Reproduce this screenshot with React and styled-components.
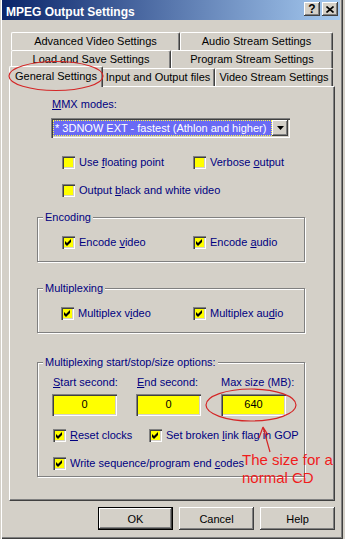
import React from 'react'
import styled, { createGlobalStyle, css } from 'styled-components'

const face = '#d4d0c8'
const navy = '#000080'

const GlobalStyle = createGlobalStyle`
  html, body {
    margin: 0;
    padding: 0;
    background: ${face};
  }
  body {
    font-family: "Liberation Sans", Arial, sans-serif;
    font-size: 11px;
  }
`

const Window = styled.div`
  position: relative;
  width: 343px;
  height: 539px;
  box-sizing: border-box;
  background: ${face};
  box-shadow: inset 1px 0 ${face}, inset 2px 0 #fff, inset -1px -1px #404040, inset -2px -2px #808080;
  display: flex;
  flex-direction: column;
  overflow: hidden;
`

const TitleBar = styled.div`
  height: 20px;
  margin: 0 3px 0 2px;
  padding: 0 2px 0 4px;
  display: flex;
  align-items: flex-start;
  background: linear-gradient(to right, #0a246a, #a6caf0);
`

const Title = styled.span`
  flex: 1;
  margin-top: 5px;
  color: #fff;
  font-weight: bold;
  font-size: 12px;
  line-height: 14px;
  white-space: nowrap;
`

const CaptionButton = styled.div`
  width: 16px;
  height: 14px;
  margin: 2px 0 0 ${p => p.$gap || 0}px;
  box-sizing: border-box;
  background: ${face};
  box-shadow: inset -1px -1px #404040, inset 1px 1px #fff, inset -2px -2px #808080;
  display: flex;
  align-items: center;
  justify-content: center;
  color: #000;
  font-weight: bold;
  font-size: 12px;
  line-height: 14px;
`

const Tabs = styled.div`
  margin: 12px 0 0 9px;
  width: 326px;
  display: flex;
  flex-direction: column;
`

const TabRow = styled.div`
  position: relative;
  z-index: ${p => (p.$front ? 2 : 1)};
  display: flex;
  height: 18px;
  padding: 0 2px;
`

const Tab = styled.div`
  position: relative;
  flex: none;
  box-sizing: border-box;
  width: ${p => p.$w}px;
  height: 18px;
  padding-bottom: 1px;
  display: flex;
  align-items: center;
  justify-content: center;
  background: ${face};
  border-top: 1px solid #fff;
  border-left: 1px solid #fff;
  border-right: 1px solid #404040;
  border-radius: 2px 2px 0 0;
  box-shadow: inset -1px 0 #808080;
  color: #000;
  white-space: nowrap;
  ${p => p.$active && css`
    z-index: 1;
    width: ${p.$w + 4}px;
    height: 21px;
    margin: -2px -2px 0;
    padding-bottom: 3px;
  `}
`

const Panel = styled.div`
  margin-left: 9px;
  width: 326px;
  height: 415px;
  box-sizing: border-box;
  border: 1px solid;
  border-color: #fff #404040 #404040 #fff;
  box-shadow: inset -1px -1px #808080;
  display: flex;
  flex-direction: column;
  align-items: flex-start;
`

const Label = styled.span`
  margin: ${p => p.$top || 0}px 0 0 ${p => p.$left || 0}px;
  color: ${navy};
  line-height: 13px;
  white-space: nowrap;
`

const Combo = styled.div`
  margin: 7px 0 0 41px;
  width: 239px;
  height: 20px;
  box-sizing: border-box;
  padding: 2px;
  display: flex;
  background: #fff;
  box-shadow: inset 1px 1px #808080, inset 2px 2px #404040, inset -1px -1px #fff, inset -2px -2px ${face};
`

const ComboValue = styled.div`
  flex: 1;
  height: 16px;
  box-sizing: border-box;
  padding-left: 1px;
  border: 1px dotted #ffff40;
  background: #6a6af4;
  color: #fff;
  line-height: 14px;
  white-space: nowrap;
  overflow: hidden;
`

const ComboButton = styled.div`
  width: 16px;
  height: 16px;
  box-sizing: border-box;
  background: ${face};
  box-shadow: inset -1px -1px #404040, inset 1px 1px #fff, inset -2px -2px #808080;
  display: flex;
  align-items: center;
  justify-content: center;
`

const CheckRow = styled.div`
  display: flex;
  margin: ${p => p.$top}px 0 0 ${p => p.$left}px;
`

const CheckItem = styled.div`
  display: flex;
  align-items: center;
  gap: 4px;
  width: ${p => (p.$w ? `${p.$w}px` : 'auto')};
  color: ${navy};
  line-height: 13px;
  white-space: nowrap;
`

const Box = styled.span`
  flex: none;
  width: 13px;
  height: 13px;
  box-sizing: border-box;
  display: flex;
  align-items: center;
  justify-content: center;
  background: #ffff00;
  box-shadow: inset 1px 1px #808080, inset 2px 2px #404040, inset -1px -1px #fff, inset -2px -2px ${face};
`

const Group = styled.div`
  margin: ${p => p.$top}px 0 0 27px;
  width: 268px;
  height: ${p => p.$h}px;
  box-sizing: border-box;
  border: 1px solid #808080;
  box-shadow: 1px 1px 0 #fff, inset 1px 1px 0 #fff;
  display: flex;
  flex-direction: column;
  align-items: flex-start;
`

const Legend = styled.span`
  margin: -7px 0 0 5px;
  padding: 0 2px;
  background: ${face};
  color: ${navy};
  line-height: 13px;
  white-space: nowrap;
`

const FieldGrid = styled.div`
  display: grid;
  grid-template-columns: repeat(3, 84px);
  margin: ${p => p.$top}px 0 0 ${p => p.$left}px;
`

const FieldLabel = styled.span`
  color: ${navy};
  line-height: 13px;
  white-space: nowrap;
`

const Edit = styled.div`
  width: 65px;
  height: 22px;
  box-sizing: border-box;
  display: flex;
  align-items: center;
  justify-content: center;
  padding-bottom: 2px;
  background: #ffff00;
  box-shadow: inset 1px 1px #808080, inset 2px 2px #404040, inset -1px -1px #fff, inset -2px -2px ${face};
  color: #000;
`

const ButtonRow = styled.div`
  margin: 6px 0 0 9px;
  width: 326px;
  display: flex;
  justify-content: flex-end;
  gap: 6px;
`

const Button = styled.div`
  width: 75px;
  height: 23px;
  box-sizing: border-box;
  display: flex;
  align-items: center;
  justify-content: center;
  background: ${face};
  color: #000;
  box-shadow: inset -1px -1px #404040, inset 1px 1px #fff, inset -2px -2px #808080;
  ${p => p.$default && css`
    border: 1px solid #000;
  `}
`

const Overlay = styled.svg`
  position: absolute;
  left: 0;
  top: 0;
  z-index: 5;
  pointer-events: none;
`

const Note = styled.div`
  position: absolute;
  left: 242px;
  top: 451px;
  z-index: 5;
  color: #f01c1c;
  font-size: 15px;
  line-height: 18px;
  white-space: nowrap;
`

const Check = ({ checked, w, children }) => (
  <CheckItem $w={w}>
    <Box>
      {checked && (
        <svg width="7" height="7" viewBox="0 0 7 7">
          <path d="M0 2 L2 4 L6 0 L6 3 L2 7 L0 5 Z" fill="#000" />
        </svg>
      )}
    </Box>
    <span>{children}</span>
  </CheckItem>
)

const App = () => {
  return (
    <>
      <GlobalStyle />
      <Window>
        <TitleBar>
          <Title>MPEG Output Settings</Title>
          <CaptionButton>?</CaptionButton>
          <CaptionButton $gap={2}>
            <svg width="8" height="7" viewBox="0 0 8 7">
              <path d="M0.5 0.5 L7.5 6.5 M7.5 0.5 L0.5 6.5" stroke="#000" strokeWidth="1.6" />
            </svg>
          </CaptionButton>
        </TitleBar>

        <Tabs>
          <TabRow>
            <Tab $w={169}>Advanced Video Settings</Tab>
            <Tab $w={153}>Audio Stream Settings</Tab>
          </TabRow>
          <TabRow>
            <Tab $w={160}>Load and Save Settings</Tab>
            <Tab $w={162}>Program Stream Settings</Tab>
          </TabRow>
          <TabRow $front>
            <Tab $w={90} $active>General Settings</Tab>
            <Tab $w={114}>Input and Output files</Tab>
            <Tab $w={118}>Video Stream Settings</Tab>
          </TabRow>
        </Tabs>

        <Panel>
          <Label $top={11} $left={42}><u>M</u>MX modes:</Label>
          <Combo>
            <ComboValue>* 3DNOW EXT - fastest (Athlon and higher)</ComboValue>
            <ComboButton>
              <svg width="7" height="4" viewBox="0 0 7 4">
                <path d="M0 0 H7 L3.5 4 Z" fill="#000" />
              </svg>
            </ComboButton>
          </Combo>

          <CheckRow $top={18} $left={52}>
            <Check w={131}>Use <u>f</u>loating point</Check>
            <Check>Verbose <u>o</u>utput</Check>
          </CheckRow>
          <CheckRow $top={15} $left={52}>
            <Check>Output <u>b</u>lack and white video</Check>
          </CheckRow>

          <Group $top={20} $h={45}>
            <Legend>Encoding</Legend>
            <CheckRow $top={12} $left={24}>
              <Check w={131} checked>Encode <u>v</u>ideo</Check>
              <Check checked>Encode <u>a</u>udio</Check>
            </CheckRow>
          </Group>

          <Group $top={26} $h={45}>
            <Legend>Multiplexing</Legend>
            <CheckRow $top={12} $left={23}>
              <Check w={132} checked>Multiplex v<u>i</u>deo</Check>
              <Check checked>Multiplex au<u>d</u>io</Check>
            </CheckRow>
          </Group>

          <Group $top={29} $h={115}>
            <Legend>Multiplexing start/stop/size options:</Legend>
            <FieldGrid $top={7} $left={15}>
              <FieldLabel><u>S</u>tart second:</FieldLabel>
              <FieldLabel><u>E</u>nd second:</FieldLabel>
              <FieldLabel>Max size (MB):</FieldLabel>
            </FieldGrid>
            <FieldGrid $top={5} $left={14}>
              <Edit>0</Edit>
              <Edit>0</Edit>
              <Edit style={{ marginLeft: 1 }}>640</Edit>
            </FieldGrid>
            <CheckRow $top={13} $left={15}>
              <Check w={96} checked><u>R</u>eset clocks</Check>
              <Check checked>Set broken <u>l</u>ink flag in GOP</Check>
            </CheckRow>
            <CheckRow $top={15} $left={15}>
              <Check checked>Write sequence/program end <u>c</u>odes</Check>
            </CheckRow>
          </Group>
        </Panel>

        <ButtonRow>
          <Button $default>OK</Button>
          <Button>Cancel</Button>
          <Button>Help</Button>
        </ButtonRow>

        <Overlay width="343" height="539" viewBox="0 0 343 539">
          <g fill="none" stroke="#d42626" strokeWidth="1.2">
            <ellipse cx="56" cy="76" rx="47" ry="14.5" />
            <ellipse cx="251" cy="405" rx="45" ry="16" />
            <path d="M263 427 L270 452 M263 427 L259 438 M263 427 L268 435" />
          </g>
        </Overlay>
        <Note>
          The size for a<br />
          normal CD
        </Note>
      </Window>
    </>
  )
}

export default App
